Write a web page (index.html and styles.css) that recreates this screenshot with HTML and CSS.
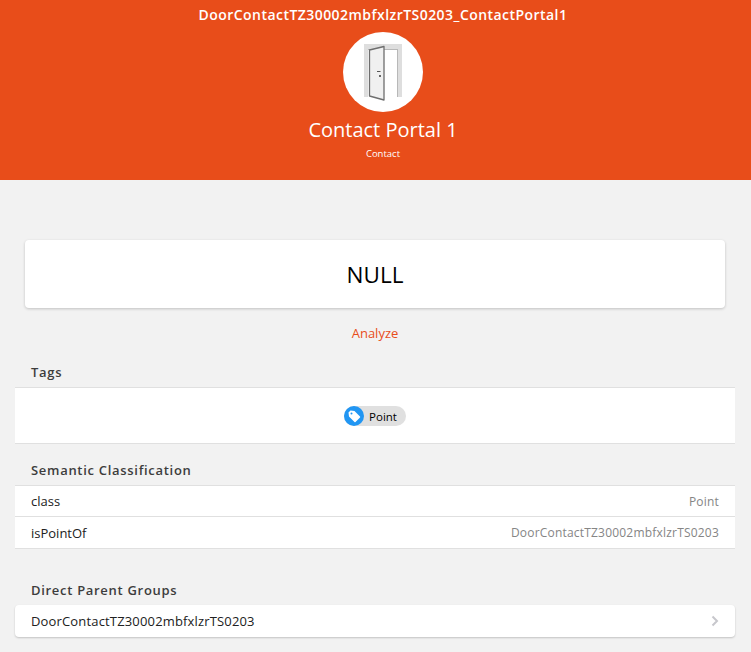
FILE: index.html
```html
<!DOCTYPE html>
<html lang="en">
<head>
    <meta charset="UTF-8">
    <meta name="viewport" content="width=device-width, initial-scale=1.0">
    <title>Contact Portal 1</title>
    <link rel="stylesheet" href="styles.css">
</head>
<body>
    <header class="hero">
        <div class="hero-title">DoorContactTZ30002mbfxlzrTS0203_ContactPortal1</div>
        <div class="hero-icon">
            <svg width="80" height="80" viewBox="0 0 80 80">
                <!-- frame -->
                <path d="M21 12H59V65H55V17H25V65H21Z" fill="#dedede"/>
                <path d="M25 17H55V65H54V18H25Z" fill="#b8b8b8"/>
                <!-- door leaf -->
                <path d="M26.500 18L41 14.500V68L26.500 64Z" fill="#f0f0f0" stroke="#6e6e6e" stroke-width="1.300" stroke-linejoin="round"/>
                <path d="M34 39.500H37.500" stroke="#555" stroke-width="1"/>
                <rect x="36" y="43" width="2" height="2" fill="#666"/>
            </svg>
        </div>
        <div class="hero-name">Contact Portal 1</div>
        <div class="hero-type">Contact</div>
    </header>

    <main class="content">
        <div class="state-card">NULL</div>
        <a class="analyze" href="#">Analyze</a>

        <h2 class="block-title block-title-tags">Tags</h2>
        <div class="tags-block">
            <span class="chip">
                <span class="chip-media">
                    <svg width="16" height="16" viewBox="0 0 16 16">
                        <path fill-rule="evenodd" d="M2.500 4.500L4.500 2.500L8.500 3L14 8.500Q14.500 9 14 9.500L9.500 14Q9 14.500 8.500 14L3 8.500ZM5.500 4.500A1 1 0 1 0 5.501 6.500A1 1 0 1 0 5.500 4.500Z" fill="#fff"/>
                    </svg>
                </span>
                <span class="chip-label">Point</span>
            </span>
        </div>

        <h2 class="block-title block-title-semantic">Semantic Classification</h2>
        <div class="list-block">
            <div class="list-row">
                <span>class</span>
                <span class="row-value">Point</span>
            </div>
            <div class="list-row">
                <span>isPointOf</span>
                <span class="row-value">DoorContactTZ30002mbfxlzrTS0203</span>
            </div>
        </div>

        <h2 class="block-title block-title-groups">Direct Parent Groups</h2>
        <div class="group-card">
            <span class="group-name">DoorContactTZ30002mbfxlzrTS0203</span>
            <svg class="chevron" width="8" height="12" viewBox="0 0 8 12">
                <path d="M1.500 1.500L6 6L1.500 10.500" fill="none" stroke="#c7c7cc" stroke-width="2"/>
            </svg>
        </div>
    </main>
</body>
</html>
```

FILE: styles.css
```css
html, body {
    height: 100%;
}

body {
    margin: 0;
    overflow: hidden;
    font-family: "Open Sans", "Noto Sans", sans-serif;
    font-size: 13px;
    color: #212121;
    background-color: #f2f2f2;
}

.hero {
    height: 180px;
    background-color: #e84d1a;
    color: #fff;
    display: flex;
    flex-direction: column;
    align-items: center;
    box-sizing: border-box;
    padding: 6px 0 0 15px;
}

.hero-title {
    font-size: 14px;
    font-weight: 600;
    line-height: 18px;
    letter-spacing: 0.45px;
}

.hero-icon {
    width: 80px;
    height: 80px;
    margin-top: 8px;
    border-radius: 50%;
    background-color: #fff;
}

.hero-icon svg {
    display: block;
}

.hero-name {
    margin-top: 5px;
    font-size: 20px;
    line-height: 26px;
}

.hero-type {
    margin-top: 4px;
    font-size: 9.5px;
    line-height: 14px;
}

.content {
    padding: 60px 16px 0 15px;
}

.state-card {
    margin: 0 10px;
    height: 68px;
    line-height: 70px;
    text-align: center;
    font-size: 22.5px;
    color: #000;
    background-color: #fff;
    border-radius: 4px;
    box-shadow: 0 1px 3px rgba(0, 0, 0, 0.2);
}

.analyze {
    display: block;
    margin-top: 16px;
    line-height: 18px;
    text-align: center;
    color: #e84d1a;
    text-decoration: none;
}

.block-title {
    margin: 0 0 6px 16px;
    font-size: 13px;
    font-weight: 600;
    line-height: 18px;
    letter-spacing: 0.7px;
    color: #3d3d3d;
}

.block-title-tags {
    margin-top: 21px;
}

.block-title-semantic {
    margin-top: 17px;
}

.block-title-groups {
    margin-top: 32px;
}

.tags-block {
    height: 55px;
    display: flex;
    align-items: center;
    justify-content: center;
    background-color: #fff;
    border-top: 1px solid #e0e0e0;
    border-bottom: 1px solid #e0e0e0;
}

.chip {
    display: flex;
    align-items: center;
    height: 20px;
    border-radius: 10px;
    background-color: #e0e0e0;
    font-size: 11.5px;
    color: #000;
}

.chip-media {
    width: 20px;
    height: 20px;
    border-radius: 50%;
    background-color: #2196f3;
    display: flex;
    align-items: center;
    justify-content: center;
}

.chip-label {
    padding: 2px 9px 0 5px;
}

.list-block {
    background-color: #fff;
    border-top: 1px solid #e0e0e0;
    border-bottom: 1px solid #e0e0e0;
}

.list-row {
    height: 30px;
    padding: 0 16px;
    display: flex;
    align-items: center;
    justify-content: space-between;
}

.list-row + .list-row {
    height: 31px;
    border-top: 1px solid #e0e0e0;
}

.row-value {
    font-size: 12px;
    letter-spacing: 0.2px;
    color: #858585;
}

.group-card {
    height: 32px;
    padding: 0 16px;
    display: flex;
    align-items: center;
    justify-content: space-between;
    background-color: #fff;
    border-radius: 4px;
    box-shadow: 0 1px 2px rgba(0, 0, 0, 0.2);
}

.group-name {
    letter-spacing: 0.16px;
}
```
